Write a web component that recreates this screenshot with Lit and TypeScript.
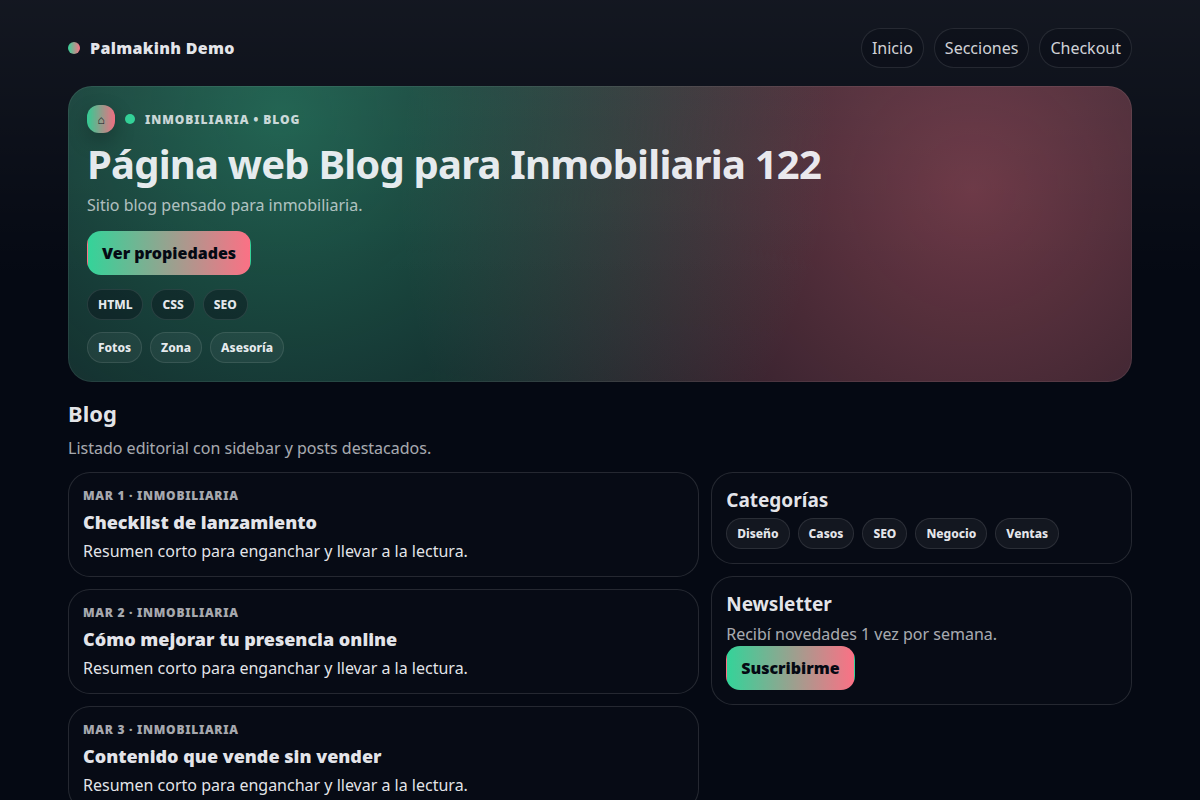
import { LitElement, html, css } from "lit";
import { customElement } from "lit/decorators.js";

const NAV = ["Inicio", "Secciones", "Checkout"];
const TECH = ["HTML", "CSS", "SEO"];
const SERVICES = ["Fotos", "Zona", "Asesoría"];
const CATEGORIES = ["Diseño", "Casos", "SEO", "Negocio", "Ventas"];
const POSTS = [
  { date: "MAR 1", title: "Checklist de lanzamiento" },
  { date: "MAR 2", title: "Cómo mejorar tu presencia online" },
  { date: "MAR 3", title: "Contenido que vende sin vender" },
];

@customElement("app-root")
export class AppRoot extends LitElement {
  static styles = css`
    :host {
      --green: #34d399;
      --pink: #fb7185;
      --text: rgba(250, 251, 255, 0.92);
      --muted: rgba(250, 251, 255, 0.68);
      --line: rgba(255, 255, 255, 0.12);
      display: block;
      box-sizing: border-box;
      height: 100vh;
      overflow: hidden;
      background: linear-gradient(180deg, rgba(255, 255, 255, 0.06), transparent 280px), #050913;
      color: var(--text);
      font-family: "Noto Sans", sans-serif;
      font-size: 16px;
    }
    * { box-sizing: border-box; }
    h1, h2, h3, p { margin: 0; }
    a { color: inherit; text-decoration: none; }
    .wrap { max-width: 1100px; margin: 0 auto; padding: 28px 18px; }
    .top { display: flex; justify-content: space-between; align-items: center; margin-bottom: 18px; }
    .brand { display: flex; align-items: center; gap: 10px; font-weight: 900; letter-spacing: 0.02em; }
    .mark { width: 12px; height: 12px; border-radius: 50%; background: linear-gradient(90deg, var(--green), var(--pink)); }
    .nav { display: flex; gap: 10px; }
    .nav a {
      padding: 8px 10px;
      border: 1px solid rgba(255, 255, 255, 0.1);
      border-radius: 999px;
      background: rgba(5, 9, 19, 0.3);
      color: rgba(250, 251, 255, 0.84);
    }
    .hero {
      padding: 18px;
      border: 1px solid rgba(255, 255, 255, 0.07);
      border-radius: 24px;
      background:
        radial-gradient(circle at 20% 10%, rgba(52, 211, 153, 0.4), transparent 62%),
        radial-gradient(circle at 85% 35%, rgba(251, 113, 133, 0.39), transparent 62%),
        rgba(255, 255, 255, 0.045);
      background-origin: border-box;
    }
    .kicker { display: flex; align-items: center; gap: 10px; font-size: 12px; font-weight: 900; letter-spacing: 0.08em; color: rgba(250, 251, 255, 0.8); }
    .badge {
      display: grid;
      place-items: center;
      width: 28px;
      height: 28px;
      border-radius: 12px;
      background: linear-gradient(90deg, var(--green), var(--pink));
      color: #0a0f1a;
      letter-spacing: 0;
      opacity: 0.95;
      box-shadow: 0 8px 20px rgba(0, 0, 0, 0.25);
    }
    .dot { width: 10px; height: 10px; border-radius: 50%; background: var(--green); }
    .title { margin: 10px 0 9px; font-size: 40px; line-height: 42px; font-weight: 700; letter-spacing: -0.02em; }
    .muted { color: var(--muted); }
    .btn {
      display: inline-block;
      padding: 10px 14px;
      border: 1px solid transparent;
      border-radius: 14px;
      background: linear-gradient(90deg, var(--green), var(--pink));
      color: #050913;
      font: inherit;
      font-weight: 900;
      cursor: pointer;
    }
    .cta { margin: 15px 0 14px; }
    .chips { display: flex; flex-wrap: wrap; gap: 8px; }
    .chips + .chips { margin-top: 12px; }
    .chip {
      padding: 6px 10px;
      border: 1px solid rgba(255, 255, 255, 0.1);
      border-radius: 999px;
      background: rgba(255, 255, 255, 0.05);
      font-size: 12px;
      font-weight: 800;
    }
    .chip.dark { background: rgba(5, 9, 19, 0.36); }
    .heading { margin: 16px 0 9px; font-size: 22px; line-height: 30px; font-weight: 700; }
    .grid { display: grid; grid-template-columns: 3fr 2fr; gap: 12px; align-items: start; margin-top: 13px; }
    .col { display: grid; gap: 12px; }
    .card { padding: 14px; border: 1px solid var(--line); border-radius: 22px; background: rgba(255, 255, 255, 0.01); }
    .meta { font-size: 12px; font-weight: 900; letter-spacing: 0.06em; color: var(--muted); }
    .post-title { margin: 6px 0; font-size: 18px; line-height: 24px; font-weight: 900; }
    .side-title { margin-bottom: 4px; font-size: 19px; line-height: 27px; font-weight: 700; }
    .side-text { line-height: 24px; color: var(--muted); }
  `;

  render() {
    return html`
      <div class="wrap">
        <header class="top">
          <div class="brand"><span class="mark"></span>Palmakinh Demo</div>
          <nav class="nav">${NAV.map((n) => html`<a href="#">${n}</a>`)}</nav>
        </header>
        <section class="hero">
          <div class="kicker">
            <span class="badge">⌂</span><span class="dot"></span><span>INMOBILIARIA • BLOG</span>
          </div>
          <h1 class="title">Página web Blog para Inmobiliaria 122</h1>
          <p class="muted">Sitio blog pensado para inmobiliaria.</p>
          <a class="btn cta" href="#">Ver propiedades</a>
          <div class="chips">${TECH.map((t) => html`<span class="chip dark">${t}</span>`)}</div>
          <div class="chips">${SERVICES.map((t) => html`<span class="chip">${t}</span>`)}</div>
        </section>
        <main>
          <h2 class="heading">Blog</h2>
          <p class="muted">Listado editorial con sidebar y posts destacados.</p>
          <div class="grid">
            <div class="col">
              ${POSTS.map((p) => html`
                <article class="card">
                  <div class="meta">${p.date} · INMOBILIARIA</div>
                  <h3 class="post-title">${p.title}</h3>
                  <p>Resumen corto para enganchar y llevar a la lectura.</p>
                </article>`)}
            </div>
            <aside class="col">
              <section class="card">
                <h3 class="side-title">Categorías</h3>
                <div class="chips">${CATEGORIES.map((c) => html`<span class="chip">${c}</span>`)}</div>
              </section>
              <section class="card">
                <h3 class="side-title">Newsletter</h3>
                <p class="side-text">Recibí novedades 1 vez por semana.</p>
                <button class="btn" type="button">Suscribirme</button>
              </section>
            </aside>
          </div>
        </main>
      </div>
    `;
  }
}
